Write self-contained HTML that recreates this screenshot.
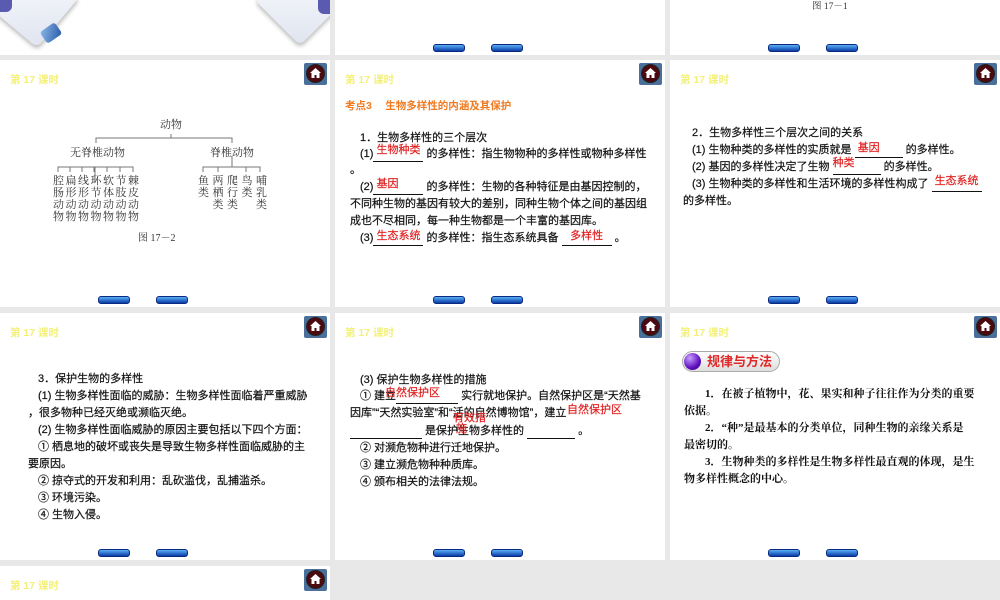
<!DOCTYPE html>
<html><head><meta charset="utf-8"><style>
*{margin:0;padding:0;box-sizing:border-box}
body{width:1000px;height:600px;background:#e8e8e8;position:relative;overflow:hidden;font-family:"Liberation Sans","Noto Sans CJK SC",sans-serif;color:#111}
.p{position:absolute;background:#fff;overflow:hidden}
.t{position:absolute;white-space:nowrap;font-size:11px;line-height:13px;-webkit-text-stroke:0.2px #111}
.hd{position:absolute;left:10px;top:12px;color:#f3f07a;font-size:10.5px;font-weight:bold}
.home{position:absolute;right:3px;top:3px;width:23px;height:22px;background:#4a6f9a;border-radius:2px}
.home i{position:absolute;left:2px;top:1px;width:19px;height:19px;border-radius:50%;background:#4a0a10;border:1px solid #222}
.home svg{position:absolute;left:6px;top:5px}
.b{position:absolute;bottom:3px;width:32px;height:8px;border-radius:3px;background:linear-gradient(#5ab0f5,#0a3aa8);border:1px solid #0a2a80}
.b1{left:98px}.b2{left:156px}
.r{color:#e02020;-webkit-text-stroke:0.2px #e02020}
.u{display:inline-block;border-bottom:1px solid #111;text-align:center}
.s{font-family:"Liberation Serif","Noto Serif CJK SC",serif}
</style></head><body>

<!-- Row 1 -->
<div class="p" style="left:0;top:0;width:330px;height:55px">
 <div style="position:absolute;left:0;top:-32px;width:66px;height:66px;background:linear-gradient(135deg,#fff,#dfe4f0);transform:rotate(40deg);border-radius:6px;box-shadow:2px 2px 4px #bbb"></div>
 <div style="position:absolute;left:0;top:0;width:12px;height:12px;background:#5a5ab0;border-radius:0 0 6px 0"></div>
 <div style="position:absolute;left:42px;top:26px;width:18px;height:14px;background:linear-gradient(135deg,#8ab8e8,#2a5aa8);transform:rotate(-35deg);border-radius:3px"></div>
 <div style="position:absolute;left:268px;top:-32px;width:64px;height:64px;background:linear-gradient(135deg,#fff,#dfe4f0);transform:rotate(45deg);border-radius:6px;box-shadow:2px 2px 4px #bbb"></div>
 <div style="position:absolute;left:318px;top:0;width:12px;height:14px;background:#5a5ab0;border-radius:0 0 0 6px"></div>
</div>
<div class="p" style="left:335px;top:0;width:330px;height:55px"><div class="b b1"></div><div class="b b2"></div></div>
<div class="p" style="left:670px;top:0;width:330px;height:55px">
 <div class="t s" style="left:142px;top:1px;font-size:9.5px;color:#333;-webkit-text-stroke:0">图 17－1</div>
 <div class="b b1"></div><div class="b b2"></div></div>

<!-- Row 2 col1 -->
<div class="p" style="left:0;top:60px;width:330px;height:247px">
 <div class="hd">第 17 课时</div><div class="home"><i></i><svg width="11" height="10" viewBox="0 0 11 10"><path d="M5.5 0L0 5h1.5v5h3V7h2v3h3V5H11z" fill="#fff"/></svg></div>
 <svg style="position:absolute;left:0;top:0" width="330" height="247">
  <g stroke="#777" stroke-width="1" fill="none">
   <path d="M171 74v4M96 83v-5h136v5M95 123v-16M58 112v-5h75v5M70 107v5M82 107v5M94 107v5M107 107v5M120 107v5M232 96v11M203 112v-5h57v5M218 107v5M246 107v5"/>
  </g>
 </svg>
 <div class="t s" style="left:160px;top:59px;font-size:11px;color:#333;-webkit-text-stroke:0">动物</div>
 <div class="t s" style="left:70px;top:87px;font-size:11px;color:#333;-webkit-text-stroke:0">无脊椎动物</div>
 <div class="t s" style="left:210px;top:87px;font-size:11px;color:#333;-webkit-text-stroke:0">脊椎动物</div>
 <div class="t s" style="left:53px;top:115px;font-size:11px;color:#333;line-height:12px;-webkit-text-stroke:0">
  <div style="display:flex;gap:1.5px"><span style="width:11px">腔<br>肠<br>动<br>物</span><span style="width:11px">扁<br>形<br>动<br>物</span><span style="width:11px">线<br>形<br>动<br>物</span><span style="width:11px">环<br>节<br>动<br>物</span><span style="width:11px">软<br>体<br>动<br>物</span><span style="width:11px">节<br>肢<br>动<br>物</span><span style="width:11px">棘<br>皮<br>动<br>物</span></div>
 </div>
 <div class="t s" style="left:198px;top:115px;font-size:11px;color:#333;line-height:12px;-webkit-text-stroke:0">
  <div style="display:flex;gap:3.5px"><span style="width:11px">鱼<br>类</span><span style="width:11px">两<br>栖<br>类</span><span style="width:11px">爬<br>行<br>类</span><span style="width:11px">鸟<br>类</span><span style="width:11px">哺<br>乳<br>类</span></div>
 </div>
 <div class="t s" style="left:138px;top:172px;font-size:10px;color:#333;-webkit-text-stroke:0">图 17－2</div>
 <div class="b b1"></div><div class="b b2"></div>
</div>

<!-- Row 2 col2 -->
<div class="p" style="left:335px;top:60px;width:330px;height:247px">
 <div class="hd">第 17 课时</div><div class="home"><i></i><svg width="11" height="10" viewBox="0 0 11 10"><path d="M5.5 0L0 5h1.5v5h3V7h2v3h3V5H11z" fill="#fff"/></svg></div>
 <div class="t" style="left:10px;top:40px;color:#f07a20;font-weight:bold;font-size:10.5px;-webkit-text-stroke:0">考点3　 生物多样性的内涵及其保护</div>
 <div class="t" style="left:25px;top:72px">1．生物多样性的三个层次</div>
 <div class="t" style="left:25px;top:88px">(1)<span class="u" style="width:50px"><span class="r" style="position:relative;top:-4px">生物种类</span></span> 的多样性：指生物物种的多样性或物种多样性</div>
 <div class="t" style="left:15px;top:104px">。</div>
 <div class="t" style="left:25px;top:121px">(2)<span class="u" style="width:50px;text-align:left"><span class="r" style="position:relative;top:-3px">&nbsp;基因</span></span> 的多样性：生物的各种特征是由基因控制的，</div>
 <div class="t" style="left:15px;top:138px">不同种生物的基因有较大的差别，同种生物个体之间的基因组</div>
 <div class="t" style="left:15px;top:155px">成也不尽相同，每一种生物都是一个丰富的基因库。</div>
 <div class="t" style="left:25px;top:172px">(3)<span class="u" style="width:50px"><span class="r" style="position:relative;top:-2px">生态系统</span></span> 的多样性：指生态系统具备 <span class="u" style="width:50px"><span class="r" style="position:relative;top:-2px">多样性</span></span> 。</div>
 <div class="b b1"></div><div class="b b2"></div>
</div>

<!-- Row 2 col3 -->
<div class="p" style="left:670px;top:60px;width:330px;height:247px">
 <div class="hd">第 17 课时</div><div class="home"><i></i><svg width="11" height="10" viewBox="0 0 11 10"><path d="M5.5 0L0 5h1.5v5h3V7h2v3h3V5H11z" fill="#fff"/></svg></div>
 <div class="t" style="left:22px;top:67px">2．生物多样性三个层次之间的关系</div>
 <div class="t" style="left:22px;top:84px">(1) 生物种类的多样性的实质就是 <span class="u" style="width:48px;text-align:left"><span class="r" style="position:relative;top:-2px">&nbsp;基因</span></span> 的多样性。</div>
 <div class="t" style="left:22px;top:101px">(2) 基因的多样性决定了生物 <span class="u" style="width:48px;text-align:left"><span class="r" style="position:relative;top:-4px">种类</span></span> 的多样性。</div>
 <div class="t" style="left:22px;top:118px">(3) 生物种类的多样性和生活环境的多样性构成了 <span class="u" style="width:50px"><span class="r" style="position:relative;top:-3px">生态系统</span></span></div>
 <div class="t" style="left:13px;top:135px">的多样性。</div>
 <div class="b b1"></div><div class="b b2"></div>
</div>

<!-- Row 3 col1 -->
<div class="p" style="left:0;top:313px;width:330px;height:247px">
 <div class="hd">第 17 课时</div><div class="home"><i></i><svg width="11" height="10" viewBox="0 0 11 10"><path d="M5.5 0L0 5h1.5v5h3V7h2v3h3V5H11z" fill="#fff"/></svg></div>
 <div class="t" style="left:38px;top:60px">3．保护生物的多样性</div>
 <div class="t" style="left:38px;top:77px">(1) 生物多样性面临的威胁：生物多样性面临着严重威胁</div>
 <div class="t" style="left:28px;top:94px">，很多物种已经灭绝或濒临灭绝。</div>
 <div class="t" style="left:38px;top:111px">(2) 生物多样性面临威胁的原因主要包括以下四个方面：</div>
 <div class="t" style="left:38px;top:128px">① 栖息地的破坏或丧失是导致生物多样性面临威胁的主</div>
 <div class="t" style="left:28px;top:145px">要原因。</div>
 <div class="t" style="left:38px;top:162px">② 掠夺式的开发和利用：乱砍滥伐，乱捕滥杀。</div>
 <div class="t" style="left:38px;top:179px">③ 环境污染。</div>
 <div class="t" style="left:38px;top:196px">④ 生物入侵。</div>
 <div class="b b1"></div><div class="b b2"></div>
</div>

<!-- Row 3 col2 -->
<div class="p" style="left:335px;top:313px;width:330px;height:247px">
 <div class="hd">第 17 课时</div><div class="home"><i></i><svg width="11" height="10" viewBox="0 0 11 10"><path d="M5.5 0L0 5h1.5v5h3V7h2v3h3V5H11z" fill="#fff"/></svg></div>
 <div class="t" style="left:25px;top:61px">(3) 保护生物多样性的措施</div>
 <div class="t" style="left:25px;top:77px">① 建立<span class="u" style="width:62px">&nbsp;</span> 实行就地保护。自然保护区是“天然基</div>
 <div class="t r" style="left:50px;top:74px">自然保护区</div>
 <div class="t" style="left:15px;top:94px">因库”“天然实验室”和“活的自然博物馆”，建立</div>
 <div class="t r" style="left:232px;top:91px">自然保护区</div>
 <div class="t" style="left:15px;top:112px"><span class="u" style="width:72px">&nbsp;</span> 是保护生物多样性的 <span class="u" style="width:48px">&nbsp;</span> 。</div>
 <div class="t r" style="left:118px;top:100px;line-height:11px">有效措<br>&nbsp;施</div>
 <div class="t" style="left:25px;top:129px">② 对濒危物种进行迁地保护。</div>
 <div class="t" style="left:25px;top:146px">③ 建立濒危物种种质库。</div>
 <div class="t" style="left:25px;top:163px">④ 颁布相关的法律法规。</div>
 <div class="b b1"></div><div class="b b2"></div>
</div>

<!-- Row 3 col3 -->
<div class="p" style="left:670px;top:313px;width:330px;height:247px">
 <div class="hd">第 17 课时</div><div class="home"><i></i><svg width="11" height="10" viewBox="0 0 11 10"><path d="M5.5 0L0 5h1.5v5h3V7h2v3h3V5H11z" fill="#fff"/></svg></div>
 <div style="position:absolute;left:12px;top:38px;width:98px;height:21px;border-radius:11px;background:linear-gradient(#fff,#ddd);border:1px solid #aaa"></div>
 <div style="position:absolute;left:14px;top:40px;width:17px;height:17px;border-radius:50%;background:radial-gradient(circle at 35% 30%,#c9a0ff,#6010c0 60%,#300070)"></div>
 <div class="t" style="left:37px;top:42px;color:#e02828;font-weight:bold;font-size:13px;line-height:14px;-webkit-text-stroke:0">规律与方法</div>
 <div class="t s" style="left:35px;top:75px;font-weight:bold;-webkit-text-stroke:0">1．在被子植物中，花、果实和种子往往作为分类的重要</div>
 <div class="t s" style="left:14px;top:92px;font-weight:bold;-webkit-text-stroke:0">依据。</div>
 <div class="t s" style="left:35px;top:109px;font-weight:bold;-webkit-text-stroke:0">2．“种”是最基本的分类单位，同种生物的亲缘关系是</div>
 <div class="t s" style="left:14px;top:126px;font-weight:bold;-webkit-text-stroke:0">最密切的。</div>
 <div class="t s" style="left:35px;top:143px;font-weight:bold;-webkit-text-stroke:0">3．生物种类的多样性是生物多样性最直观的体现，是生</div>
 <div class="t s" style="left:14px;top:160px;font-weight:bold;-webkit-text-stroke:0">物多样性概念的中心。</div>
 <div class="b b1"></div><div class="b b2"></div>
</div>

<!-- Row 4 -->
<div class="p" style="left:0;top:566px;width:330px;height:34px">
 <div class="hd">第 17 课时</div><div class="home"><i></i><svg width="11" height="10" viewBox="0 0 11 10"><path d="M5.5 0L0 5h1.5v5h3V7h2v3h3V5H11z" fill="#fff"/></svg></div>
</div>
</body></html>
